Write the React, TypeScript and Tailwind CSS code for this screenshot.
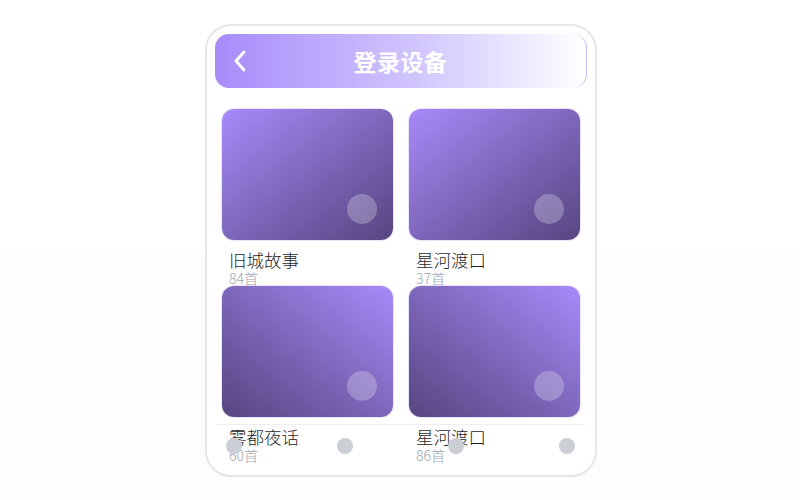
const albums = [
  { name: "旧城故事", count: 84, dir: "bg-linear-to-br" },
  { name: "星河渡口", count: 37, dir: "bg-linear-to-br" },
  { name: "雾都夜话", count: 60, dir: "bg-linear-to-bl" },
  { name: "星河渡口", count: 86, dir: "bg-linear-to-bl" },
];

const AlbumCard = ({ name, count, dir }: { name: string; count: number; dir: string }) => {
  return (
    <div className="flex flex-col">
      <div
        className={`relative h-[134px] rounded-[12px] ${dir} from-[#a78bfa] to-[#574681] shadow-[0_0_0_1px_rgba(196,181,253,0.35)]`}
      >
        <div className="absolute right-4 bottom-4 w-[30px] h-[30px] rounded-full bg-white/25" />
      </div>
      <div className="mt-[10px] px-[7px]">
        <p className="text-[17.5px] leading-[20px] font-light text-[#1f1f1f]">{name}</p>
        <p className="text-[14px] leading-[16px] font-light text-[#9ca3af]">{count}首</p>
      </div>
    </div>
  );
};

export default function App() {
  return (
    <div
      className="h-[500px] w-full bg-linear-to-b from-white from-50% to-[#fdfdfd] to-50% pt-[24px]"
      style={{ fontFamily: '"Noto Sans CJK SC", "Noto Sans", sans-serif' }}
    >
      <div className="relative ml-[205px] w-[392px] h-[453px] rounded-[26px] border-2 border-[#e6e6ea] bg-white px-[8px] pt-[8px]">
        <header className="relative flex items-center justify-center h-[54px] rounded-[14px] bg-linear-to-r from-[#a78bfa] via-[#d2c6fd] via-55% to-white border-r border-[#c4b5fd]">
          <button className="absolute left-[17px] top-1/2 -translate-y-1/2 flex items-center">
            <svg width="16" height="24" viewBox="0 0 16 24" fill="none">
              <polyline
                points="12,3 4,12 12,21"
                stroke="white"
                strokeWidth="3"
                strokeLinecap="round"
                strokeLinejoin="round"
              />
            </svg>
          </button>
          <h1 className="text-[23px] font-bold text-white tracking-[0.5px]">登录设备</h1>
        </header>

        <div className="grid grid-cols-2 gap-x-4 auto-rows-[177px] mt-[21px] px-[7px]">
          {albums.map((a, i) => (
            <AlbumCard key={i} {...a} />
          ))}
        </div>

        <nav className="absolute left-[9px] right-[10px] bottom-0 h-[51px] border-t border-[#eeeef2] flex justify-between px-[10px] pt-[13px]">
          <span className="w-4 h-4 rounded-full bg-[#cbcfd5]" />
          <span className="w-4 h-4 rounded-full bg-[#cbcfd5]" />
          <span className="w-4 h-4 rounded-full bg-[#cbcfd5]" />
          <span className="w-4 h-4 rounded-full bg-[#cbcfd5]" />
        </nav>
      </div>
    </div>
  );
}
